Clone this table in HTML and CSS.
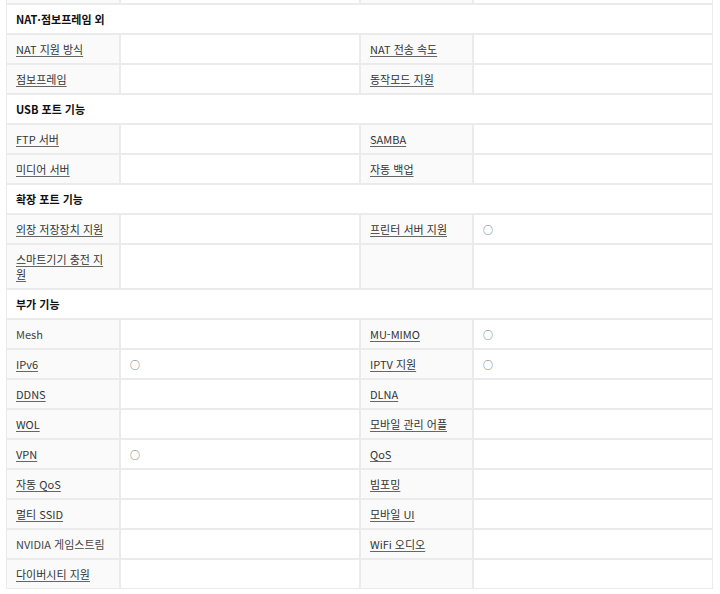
FILE: index.html
```html
<!DOCTYPE html>
<html lang="ko">
<head>
<meta charset="utf-8">
<link rel="stylesheet" href="styles.css">
</head>
<body>
<div class="wrap">
<table class="spec">
<colgroup><col class="c1"><col class="c2"><col class="c3"><col class="c4"></colgroup>
<tbody>
<tr class="prev"><th></th><td></td><th></th><td></td></tr>
<tr><td class="sec" colspan="4">NAT·점보프레임 외</td></tr>
<tr><th><a href="#">NAT 지원 방식</a></th><td></td><th><a href="#">NAT 전송 속도</a></th><td></td></tr>
<tr><th><a href="#">점보프레임</a></th><td></td><th><a href="#">동작모드 지원</a></th><td></td></tr>
<tr><td class="sec" colspan="4">USB 포트 기능</td></tr>
<tr><th><a href="#">FTP 서버</a></th><td></td><th><a href="#">SAMBA</a></th><td></td></tr>
<tr><th><a href="#">미디어 서버</a></th><td></td><th><a href="#">자동 백업</a></th><td></td></tr>
<tr><td class="sec" colspan="4">확장 포트 기능</td></tr>
<tr><th><a href="#">외장 저장장치 지원</a></th><td></td><th><a href="#">프린터 서버 지원</a></th><td><span class="o">○</span></td></tr>
<tr><th><a href="#">스마트기기 충전 지원</a></th><td></td><th></th><td></td></tr>
<tr><td class="sec" colspan="4">부가 기능</td></tr>
<tr><th><span class="plain">Mesh</span></th><td></td><th><a href="#">MU-MIMO</a></th><td><span class="o">○</span></td></tr>
<tr><th><a href="#">IPv6</a></th><td><span class="o">○</span></td><th><a href="#">IPTV 지원</a></th><td><span class="o">○</span></td></tr>
<tr><th><a href="#">DDNS</a></th><td></td><th><a href="#">DLNA</a></th><td></td></tr>
<tr><th><a href="#">WOL</a></th><td></td><th><a href="#">모바일 관리 어플</a></th><td></td></tr>
<tr><th><a href="#">VPN</a></th><td><span class="o">○</span></td><th><a href="#">QoS</a></th><td></td></tr>
<tr><th><a href="#">자동 QoS</a></th><td></td><th><a href="#">빔포밍</a></th><td></td></tr>
<tr><th><a href="#">멀티 SSID</a></th><td></td><th><a href="#">모바일 UI</a></th><td></td></tr>
<tr><th><span class="plain">NVIDIA 게임스트림</span></th><td></td><th><a href="#">WiFi 오디오</a></th><td></td></tr>
<tr><th><a href="#">다이버시티 지원</a></th><td></td><th></th><td></td></tr>
</tbody>
</table>
</div>
</body>
</html>
```
FILE: styles.css
```css
html, body {
  margin: 0;
  padding: 0;
  background: #ffffff;
}
body {
  font-family: "Noto Sans CJK KR", "Noto Sans", sans-serif;
  font-size: 11px;
  color: #333;
}
.wrap {
  padding-left: 6px;
  overflow: hidden;
  height: 594px;
}
.spec {
  width: 707px;
  table-layout: fixed;
  border-collapse: separate;
  border-spacing: 0;
  margin-top: -26px;
}
.c1 { width: 114px; }
.c2 { width: 240px; }
.c3 { width: 113px; }
.c4 { width: 240px; }
.spec th,
.spec td {
  border: 1px solid #ebebeb;
  height: 30px;
  padding: 7px 9px 6px;
  box-sizing: border-box;
  text-align: left;
  vertical-align: middle;
  font-weight: normal;
  line-height: 15px;
}
.spec th {
  background: #fafafa;
}
.spec td.sec {
  font-weight: bold;
  color: #111;
  background: #fff;
}
.spec a {
  color: #333;
  text-decoration: underline;
  text-decoration-color: #666;
  text-underline-offset: 2px;
}
.plain {
  color: #444;
}
.o {
  display: block;
  height: 15px;
  line-height: 15px;
  overflow: hidden;
  color: #666;
  font-size: 10px;
  font-family: "Noto Sans CJK KR", sans-serif;
}
```
